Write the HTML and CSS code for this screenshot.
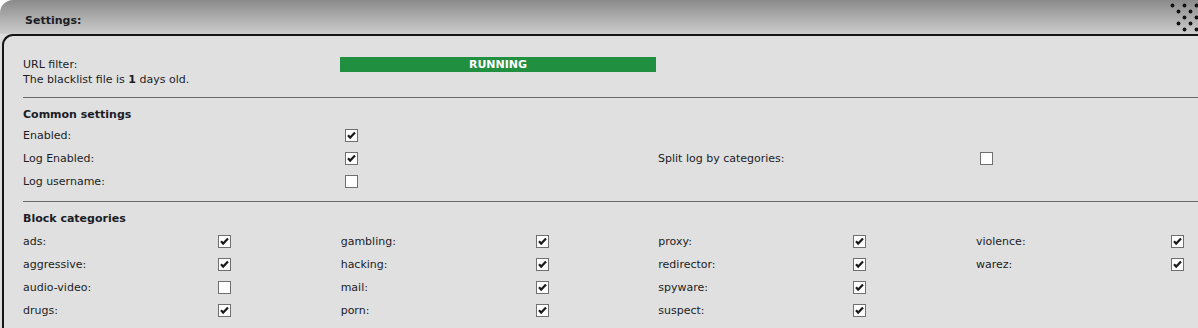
FILE: index.html
```html
<!DOCTYPE html>
<html>
<head>
    <meta charset="UTF-8">
    <title>Settings</title>
    <link rel="stylesheet" href="styles.css">
</head>
<body>
    <div class="frame">
        <div class="frame-header">
            <span class="frame-title">Settings:</span>
            <svg class="dots" width="30" height="32" viewBox="0 0 30 32" fill="#111">
                <circle cx="4.5" cy="5.5" r="1.9"/>
                <circle cx="16.5" cy="5.5" r="1.9"/>
                <circle cx="28.5" cy="5.5" r="1.9"/>
                <circle cx="10.5" cy="11.5" r="1.9"/>
                <circle cx="22.5" cy="11.5" r="1.9"/>
                <circle cx="16.5" cy="17.5" r="1.9"/>
                <circle cx="28.5" cy="17.5" r="1.9"/>
                <circle cx="10.5" cy="23.5" r="1.9"/>
                <circle cx="22.5" cy="23.5" r="1.9"/>
                <circle cx="16.5" cy="29.5" r="1.9"/>
                <circle cx="28.5" cy="29.5" r="1.9"/>
            </svg>
        </div>

        <div class="panel">
            <!-- filter status -->
            <div class="status-row">
                <span>URL filter:</span>
                <div class="status-bar">RUNNING</div>
            </div>
            <div class="line">The blacklist file is <b>1</b> days old.</div>

            <hr class="sep sep-first">

            <div class="section-title">Common settings</div>
            <div class="common-grid">
                <span>Enabled:</span>
                <span class="box checked"><svg viewBox="0 0 11 11"><path d="M2 5.2 L4.2 7.6 L9 2.6"/></svg></span>
                <span></span>
                <span></span>

                <span>Log Enabled:</span>
                <span class="box checked"><svg viewBox="0 0 11 11"><path d="M2 5.2 L4.2 7.6 L9 2.6"/></svg></span>
                <span>Split log by categories:</span>
                <span class="box"></span>

                <span>Log username:</span>
                <span class="box"></span>
                <span></span>
                <span></span>
            </div>

            <hr class="sep">

            <div class="section-title">Block categories</div>
            <div class="cat-grid">
                <span>ads:</span>
                <span class="box checked"><svg viewBox="0 0 11 11"><path d="M2 5.2 L4.2 7.6 L9 2.6"/></svg></span>
                <span>gambling:</span>
                <span class="box checked"><svg viewBox="0 0 11 11"><path d="M2 5.2 L4.2 7.6 L9 2.6"/></svg></span>
                <span>proxy:</span>
                <span class="box checked"><svg viewBox="0 0 11 11"><path d="M2 5.2 L4.2 7.6 L9 2.6"/></svg></span>
                <span>violence:</span>
                <span class="box checked"><svg viewBox="0 0 11 11"><path d="M2 5.2 L4.2 7.6 L9 2.6"/></svg></span>

                <span>aggressive:</span>
                <span class="box checked"><svg viewBox="0 0 11 11"><path d="M2 5.2 L4.2 7.6 L9 2.6"/></svg></span>
                <span>hacking:</span>
                <span class="box checked"><svg viewBox="0 0 11 11"><path d="M2 5.2 L4.2 7.6 L9 2.6"/></svg></span>
                <span>redirector:</span>
                <span class="box checked"><svg viewBox="0 0 11 11"><path d="M2 5.2 L4.2 7.6 L9 2.6"/></svg></span>
                <span>warez:</span>
                <span class="box checked"><svg viewBox="0 0 11 11"><path d="M2 5.2 L4.2 7.6 L9 2.6"/></svg></span>

                <span>audio-video:</span>
                <span class="box"></span>
                <span>mail:</span>
                <span class="box checked"><svg viewBox="0 0 11 11"><path d="M2 5.2 L4.2 7.6 L9 2.6"/></svg></span>
                <span>spyware:</span>
                <span class="box checked"><svg viewBox="0 0 11 11"><path d="M2 5.2 L4.2 7.6 L9 2.6"/></svg></span>
                <span></span>
                <span></span>

                <span>drugs:</span>
                <span class="box checked"><svg viewBox="0 0 11 11"><path d="M2 5.2 L4.2 7.6 L9 2.6"/></svg></span>
                <span>porn:</span>
                <span class="box checked"><svg viewBox="0 0 11 11"><path d="M2 5.2 L4.2 7.6 L9 2.6"/></svg></span>
                <span>suspect:</span>
                <span class="box checked"><svg viewBox="0 0 11 11"><path d="M2 5.2 L4.2 7.6 L9 2.6"/></svg></span>
                <span></span>
                <span></span>
            </div>
        </div>
    </div>
</body>
</html>
```

FILE: styles.css
```css
body {
    margin: 0;
    background-color: #fff;
    font-family: "DejaVu Sans", Verdana, sans-serif;
    font-size: 11px;
    color: #1c1c24;
    overflow: hidden;
}

.frame {
    width: 1300px;
    border-top-left-radius: 13px;
    background: linear-gradient(#8a8a8a, #cdcdcd 34px, #dcdcdc 34px);
}

.frame-header {
    height: 34px;
    display: flex;
    align-items: flex-start;
    justify-content: space-between;
}

.frame-title {
    font-weight: bold;
    margin: 14px 0 0 25px;
}

.dots {
    margin-right: 102px;
}

.panel {
    margin-left: 2px;
    padding: 20px 0 20px 19px;
    border-top: 2px solid #151515;
    border-left: 2px solid #151515;
    border-top-left-radius: 11px;
    background-color: #e0e0e0;
}

/* status */
.status-row {
    display: grid;
    grid-template-columns: 317px 316px;
    align-items: center;
    height: 16px;
}

.status-bar {
    height: 15px;
    line-height: 15px;
    background-color: #218f40;
    color: #fff;
    font-weight: bold;
    text-align: center;
}

.line {
    height: 16px;
    line-height: 16px;
}

.sep {
    border: none;
    border-top: 1px solid #6a6a6a;
    margin: 8px 0 9px 0;
}

.sep-first {
    margin: 9px 0;
}

.section-title {
    font-weight: bold;
    height: 16px;
    line-height: 16px;
}

.common-grid,
.cat-grid {
    display: grid;
    grid-auto-rows: 23px;
    align-items: center;
}

.common-grid {
    grid-template-columns: 322px 313px 322px 100px;
    margin-top: 1px;
}

.cat-grid {
    grid-template-columns: repeat(4, 195px 122.67px);
    margin-top: 3px;
}

/* checkbox */
.box {
    width: 11px;
    height: 11px;
    border: 1px solid #6f6f6f;
    background-color: #fff;
}

.box svg {
    display: block;
    width: 11px;
    height: 11px;
    fill: none;
    stroke: #1a1a1a;
    stroke-width: 2.2;
}
```
